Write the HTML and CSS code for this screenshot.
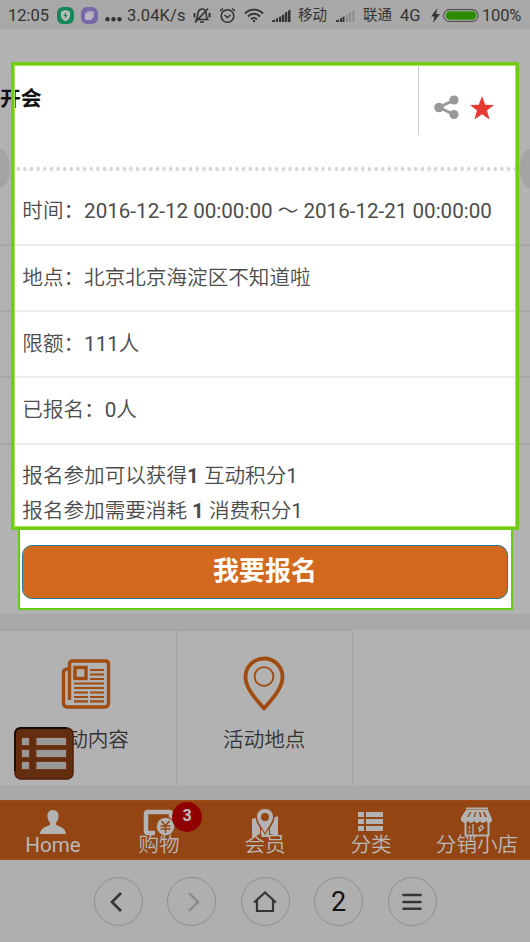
FILE: index.html
```html
<!DOCTYPE html>
<html lang="zh-CN">
<head>
<meta charset="utf-8">
<title>开会</title>
<link rel="stylesheet" href="styles.css">
</head>
<body>
<header class="status">
  <span class="time">12:05</span>
  <svg class="st-app" width="17" height="17" viewBox="0 0 17 17"><rect width="17" height="17" rx="6" fill="#168759"/><path d="M8.5 3 13 4.6v4.1c0 2.5-1.8 4.2-4.5 5.5C5.800 12.900 4 11.200 4 8.700V4.600z" fill="#b5bdb9"/><path d="M9.300 5 6.300 9h2l-.6 3 3-4h-2z" fill="#168759"/></svg>
  <svg class="st-app2" width="17" height="17" viewBox="0 0 17 17"><rect width="17" height="17" rx="6" fill="#7768a8"/><rect x="6" y="4" width="7" height="7" rx="1" fill="#aaa5b8"/><rect x="4" y="6" width="7" height="7" rx="1" fill="#b8b4c2"/></svg>
  <svg class="st-dots" width="17" height="17" viewBox="0 0 17 17" fill="#333"><circle cx="2.500" cy="12.300" r="2.200"/><circle cx="8.500" cy="12.300" r="2.200"/><circle cx="14.500" cy="12.300" r="2.200"/></svg>
  <span class="speed">3.04K/s</span>
  <svg class="st-mute" width="18" height="17" viewBox="0 0 18 17" fill="none" stroke="#333" stroke-width="1.600"><path d="M3.500 12.500c1.500-1.500 1-5 1.500-7C5.600 3.300 7 2 9 2s3.600 1.300 4 3.500c.5 2 0 5.500 1.500 7zM7 15h4M2 15.500 15 1.500"/><path stroke-width="2" d="M1.500 6v4.500M16.500 6v4.500"/></svg>
  <svg class="st-alarm" width="17" height="17" viewBox="0 0 17 17" fill="none" stroke="#333" stroke-width="1.600"><circle cx="8.500" cy="9" r="6.300"/><path d="m5.500 8 3 2.500 3-2.500M1 4l3-2.500M16 4l-3-2.500"/></svg>
  <svg class="st-wifi" width="20" height="15" viewBox="0 0 20 15" fill="none" stroke="#333" stroke-width="1.900"><path d="M1 5.500C6 .3 14 .3 19 5.500M4 8.500c3.500-3.600 8.500-3.600 12 0M7 11.300c2-1.900 4-1.900 6 0"/><circle cx="10" cy="13" r="1.200" fill="#333" stroke="none"/></svg>
  <svg class="st-sig" width="19" height="13" viewBox="0 0 19 13" fill="#333"><path d="M0 11.500 3 10.500V13H0zM4 9.500l2-.8V13H4zM7 8l2.300-.8V13H7zM10 6l2.300-.8V13H10zM13 3.500l2.300-.8V13H13zM16 1.500l2.500-.8V13H16z"/></svg>
  <span class="op1">移动</span>
  <svg class="st-sig2" width="19" height="13" viewBox="0 0 19 13"><path fill="#333" d="M0 11.500 3 10.500V13H0zM4 9.500l2-.8V13H4zM6.500 8l2-.8V13h-2z"/><path fill="#8b8b8b" d="M10 6l2-.8V13h-2zM13 3.500l2-.8V13h-2zM16.500 1.500l2-.8V13h-2z"/></svg>
  <span class="op2">联通</span>
  <span class="net">4G</span>
  <svg class="st-bolt" width="9" height="15" viewBox="0 0 9 15" fill="#333"><path d="M6.500 0 0 8.500h3.500L2 15l7-9H5z"/></svg>
  <svg class="st-bat" width="36" height="13" viewBox="0 0 36 13"><rect x=".6" y=".6" width="34.500" height="11.800" rx="5.900" fill="#b5b5b5" stroke="#505050" stroke-width="1.200"/><rect x="2.500" y="2.300" width="31" height="8.400" rx="4.200" fill="#2d8c00"/></svg>
  <span class="pct">100%</span>
</header>

<main>
  <section class="panel">
    <div class="head">
      <h1>开会</h1>
      <div class="actions">
        <svg width="25" height="25" viewBox="0 0 25 25"><path d="M20 5 5 12.500 20 19.500" fill="none" stroke="#999" stroke-width="3"/><g fill="#999"><circle cx="20" cy="5" r="4.600"/><circle cx="5" cy="12.500" r="4.800"/><circle cx="20" cy="19.500" r="4.600"/></g></svg>
        <svg width="24" height="24" viewBox="0 0 24 24"><path fill="#e53b32" d="m12 0 3.200 8.700 8.800.2-7 5.500 2.600 9.100L12 18.300 4.400 23.500 7 14.400 0 8.900l8.800-.2z"/></svg>
      </div>
    </div>
    <div class="dots"></div>
    <div class="row first">时间：<span class="num">2016-12-12 00:00:00 </span>～<span class="num"> 2016-12-21 00:00:00</span></div>
    <div class="row">地点：北京北京海淀区不知道啦</div>
    <div class="row">限额：<span class="num">111</span>人</div>
    <div class="row">已报名：<span class="num">0</span>人</div>
    <div class="points"><p>报名参加可以获得<b>1</b> 互动积分<span class="num">1</span></p><p>报名参加需要消耗 <b>1</b> 消费积分<span class="num">1</span></p></div>
  </section>
  <div class="signup"><button>我要报名</button></div>
  <section class="tiles">
    <a class="tile"><svg width="50" height="56" viewBox="0 0 50 56" fill="none" stroke="#a04b0f" stroke-width="3.400"><path d="M8.500 44V8q0-3 3-3h33q3 0 3 3v39q0 4-4 4H6.500q-4 0-4-4V16q0-3 5-3"/><rect x="14" y="11.500" width="11" height="11"/><path stroke-width="2.200" d="M29 14h14M29 18.500h14M29 23h14M13 27.500h30M13 32h30M13 36.500h14M29 36.500h14M13 41h14M29 41h14M13 45.300h14M29 45.300h14"/></svg><span>活动内容</span></a>
    <a class="tile"><svg width="42" height="56" viewBox="0 0 42 56" fill="none" stroke="#a04b0f"><path stroke-width="3.800" stroke-linejoin="round" d="M21 52.500C14 44 2.500 33 2.500 21a18.500 18.500 0 0 1 37 0C39.500 33 28 44 21 52.500z"/><circle cx="21" cy="20.500" r="9.400" stroke-width="1.900"/></svg><span>活动地点</span></a>
    <a class="menu"><svg width="60" height="53" viewBox="0 0 60 53"><rect x="1" y="1" width="58" height="51" rx="6" fill="#632e10" stroke="#4f1d06" stroke-width="1.500"/><path d="M1 44V7q0-6 6-6h46" fill="none" stroke="#140b06" stroke-width="1.800"/><g fill="#989898" stroke="#773716"><path d="M7.500 10.500h8v8h-8zM22 10.500h30.500v8H22zM7.500 22.500h8v8h-8zM22 22.500h30.500v8H22zM7.500 34.500h8v8h-8zM22 34.500h30.500v8H22z"/></g></svg></a>
  </section>
</main>

<nav class="tabs">
  <a><svg width="28" height="28" viewBox="0 0 28 28" fill="#b3b3b3"><path d="M14 1c4 0 6 3 5.500 7-.3 3-1.500 4.500-2.500 6v2c4 1.500 9.500 3 10 9H1c.5-6 6-7.500 10-9v-2C10 12.500 8.800 11 8.500 8 8 4 10 1 14 1z"/></svg><span class="home">Home</span></a>
  <a><svg width="32" height="28" viewBox="0 0 32 28"><path d="M12 24H5q-2 0-2-2V5q0-2 2-2h21q2 0 2 2v7" fill="none" stroke="#b3b3b3" stroke-width="4.500"/><circle cx="22.500" cy="17.500" r="10" fill="#934613"/><circle cx="22.500" cy="17.500" r="8.700" fill="#b3b3b3"/><path d="m18.500 12 4 4.500 4-4.500M17.500 17h10M17.500 20h10M22.500 16.500V24" fill="none" stroke="#934613" stroke-width="1.500"/></svg><span>购物</span><i class="badge">3</i></a>
  <a><svg width="28" height="28" viewBox="0 0 28 28" fill="#b3b3b3"><path d="m1 10 5-2 3 8v9l-8 4zM10 17l4 8 4-8v11l-4 1-4-4zM19 16l3-7 5-2v20l-8-2z"/><path fill="#934613" d="M14 27C9 19 4.500 13 4.500 8h19c0 5-4.500 11-9.500 19z"/><path d="M10.500 20 14 26l3.500-6v8h-7z"/><path fill-rule="evenodd" d="M14 0c5 0 8 3 8 8 0 4-4 9-8 16C10 17 6 12 6 8c0-5 3-8 8-8zm0 4a4 4 0 1 0 0 8 4 4 0 0 0 0-8z"/></svg><span>会员</span></a>
  <a><svg width="26" height="28" viewBox="0 0 26 28" fill="#b3b3b3"><path d="M0 3h6v5H0zM8 3h17v5H8zM0 10h6v5H0zM8 10h17v5H8zM0 17h6v5H0zM8 17h17v5H8z"/></svg><span>分类</span></a>
  <a><svg class="shop" width="32" height="30" viewBox="0 0 32 30" fill="none" stroke="#b3b3b3"><path stroke-width="2" d="M5 1.500h22M4.500 29V14M27.500 29V14M4 28.500h24"/><path fill="#b3b3b3" stroke="none" fill-rule="evenodd" d="M5 3h22l4 9v2q-3 4-6 0-3 4-6 0-3 4-6 0-3 4-6 0-3 4-6 0-1 1-2 0v-2zM9 5l-3 5h1.500l3-5zm5 0-1.500 5H14l1.200-5zm4 0 1 5h1.500l-1-5zm4 0 2 5H26l-2.500-5z"/><path stroke-width="1.300" d="M12 17v11M8.500 19v3M8.500 23.500V26M17 22l4-4M18 25l5-5M20 18l2 2M17 21l3 3"/></svg><span>分销小店</span></a>
</nav>

<footer class="browser">
  <a><svg width="26" height="26" viewBox="0 0 26 26"><path d="m16 4-9 9 9 9" fill="none" stroke="#353535" stroke-width="2.700"/></svg></a>
  <a><svg width="26" height="26" viewBox="0 0 26 26"><path d="m10 4 9 9-9 9" fill="none" stroke="#8a8a8a" stroke-width="2.400"/></svg></a>
  <a><svg width="26" height="26" viewBox="0 0 26 26"><path d="M2 13.500 13 3.500 24 13.500M5 11.500V22h16V11.500" fill="none" stroke="#353535" stroke-width="2.200"/></svg></a>
  <a><span>2</span></a>
  <a><svg width="26" height="26" viewBox="0 0 26 26"><path d="M4.500 6h17M4.500 13h17M4.500 19.800h17" fill="none" stroke="#353535" stroke-width="2.600" stroke-linecap="round"/></svg></a>
</footer>
</body>
</html>
```
FILE: styles.css
```css
* { box-sizing: border-box; }
body {
  margin: 0;
  width: 530px;
  height: 942px;
  overflow: hidden;
  background: #b2b2b2;
  font-family: Roboto, "Noto Sans CJK SC", sans-serif;
  color: #4c4c4c;
}
svg { display: block; flex: none; }
h1, p { margin: 0; }

.status {
  display: flex;
  align-items: center;
  height: 29px;
  padding: 1px 0 0 8px;
  background: #a8a8a9;
  color: #333;
  font-size: 16.500px;
  white-space: nowrap;
}
.status > * { flex: none; }
.time { width: 49px; }
.st-app { margin-right: 7px; }
.st-app2 { margin-right: 7px; }
.st-dots { margin-right: 5px; }
.speed { width: 66px; letter-spacing: .1px; }
.st-mute { margin-right: 8px; }
.st-alarm { margin-right: 8px; }
.st-wifi { margin-right: 8px; }
.st-sig { margin-right: 7px; }
.op1, .op2 { font-size: 14.500px; line-height: 20px; margin-top: 1px; }
.op1 { width: 38px; }
.st-sig2 { margin-right: 8px; }
.op2 { width: 37px; }
.net { width: 31px; }
.st-bolt { margin-right: 3px; }
.st-bat { margin-right: 3px; }
.pct { letter-spacing: -.2px; }

main { height: 771px; padding-top: 33px; }
.panel {
  position: relative;
  width: 508px;
  height: 468px;
  margin-left: 11px;
  padding: 4px;
  background: #fff;
}
.panel::after {
  content: "";
  position: absolute;
  inset: 0;
  border: 3.500px solid #73cc14;
  box-shadow: inset 0 0 0 1px #a9e463;
}
.head {
  display: flex;
  justify-content: space-between;
  height: 69px;
}
h1 {
  margin: 18px 0 0 -15px;
  color: #111;
  font-size: 20.800px;
  line-height: 30px;
  font-weight: 700;
}
.actions {
  display: flex;
  align-items: center;
  gap: 11px;
  width: 97px;
  padding: 14px 0 0 15px;
  border-left: 1px solid #ccc;
}
.dots {
  position: relative;
  height: 66px;
  background: radial-gradient(ellipse 2.200px 2.800px at center, #d6d6d6 60%, transparent) 0 31px / 6.630px 6px repeat-x;
}
.dots::before, .dots::after {
  content: "";
  position: absolute;
  top: 14px;
  width: 10px;
  height: 39px;
  background: #a4a4a4;
}
.dots::before { left: -15px; border-radius: 0 10px 10px 0 / 0 20px 20px 0; }
.dots::after { right: -15px; border-radius: 10px 0 0 10px / 20px 0 0 20px; }
.row {
  position: relative;
  height: 66.200px;
  padding: 17px 0 0 7.300px;
  font-size: 20.600px;
  line-height: 30px;
  font-weight: 350;
  white-space: nowrap;
  border-bottom: 2px solid #ededed;
}
.row.first { height: 45px; padding-top: 0; line-height: 20px; }
.row::before, .row::after {
  content: "";
  position: absolute;
  bottom: -2px;
  width: 11px;
  height: 2px;
  background: #a7a7a7;
}
.row::before { left: -15px; }
.row::after { right: -15px; }
.num { font-weight: 400; }
.points {
  padding: 14px 0 0 7.300px;
  font-size: 20.600px;
  line-height: 35px;
  font-weight: 350;
}
.points b { font-weight: 700; }
.signup {
  width: 495px;
  height: 80px;
  margin-left: 17.500px;
  padding: 15px 2px 0;
  background: #fff;
  border: 2px solid #66cc14;
  border-top: 0;
}
button {
  display: block;
  width: 486px;
  height: 54px;
  margin: 0 auto;
  padding: 0 0 7px;
  border: 1px solid #217f9b;
  border-radius: 10px;
  background: #d2691e;
  color: #fff;
  font: 700 26px Roboto, "Noto Sans CJK SC", sans-serif;
}
.tiles {
  position: relative;
  display: flex;
  height: 186px;
  margin-top: 4px;
  border-top: 16px solid #a9a9a9;
  border-bottom: 15px solid #a9a9a9;
}
.tile {
  display: flex;
  flex-direction: column;
  align-items: center;
  width: 176.500px;
  padding-top: 25px;
  border-top: 1px solid #a4a4a4;
  border-right: 1.500px solid #a4a4a4;
  font-size: 20.600px;
  line-height: 30px;
  font-weight: 350;
  color: #333;
}
.tile svg { margin-left: -4px; }
.tile + .tile svg { margin-left: 0; }
.tile span { margin-top: 13px; }
.menu { position: absolute; left: 14px; top: 97px; }

.tabs {
  display: grid;
  grid-template-columns: repeat(5, 1fr);
  height: 60px;
  background: #934613;
  border-top: 1px solid #a14b12;
  border-bottom: 2px solid #9b4b18;
  color: #b9b9b9;
}
.tabs a {
  position: relative;
  display: flex;
  flex-direction: column;
  align-items: center;
  padding-top: 8px;
  font-size: 20.600px;
}
.tabs svg { height: 28px; }
.tabs .shop { height: 30px; margin: -2px 0 0; }
.tabs span { margin-top: -7px; line-height: 30px; font-weight: 350; white-space: nowrap; }
.tabs .home { font-weight: 400; }
.badge {
  position: absolute;
  left: 66px;
  top: 1px;
  width: 30px;
  height: 30px;
  border-radius: 50%;
  background: #900000;
  color: #bcbcbc;
  font: 700 16px/28px Roboto, sans-serif;
  text-align: center;
}
.browser {
  display: flex;
  justify-content: center;
  gap: 24.500px;
  height: 82px;
  padding-top: 17px;
  background: #afafaf;
}
.browser a {
  display: flex;
  align-items: center;
  justify-content: center;
  width: 49px;
  height: 49px;
  border: 1px solid #8e8e8e;
  border-radius: 50%;
}
.browser span { color: #111; font-size: 27px; font-weight: 400; }
```
